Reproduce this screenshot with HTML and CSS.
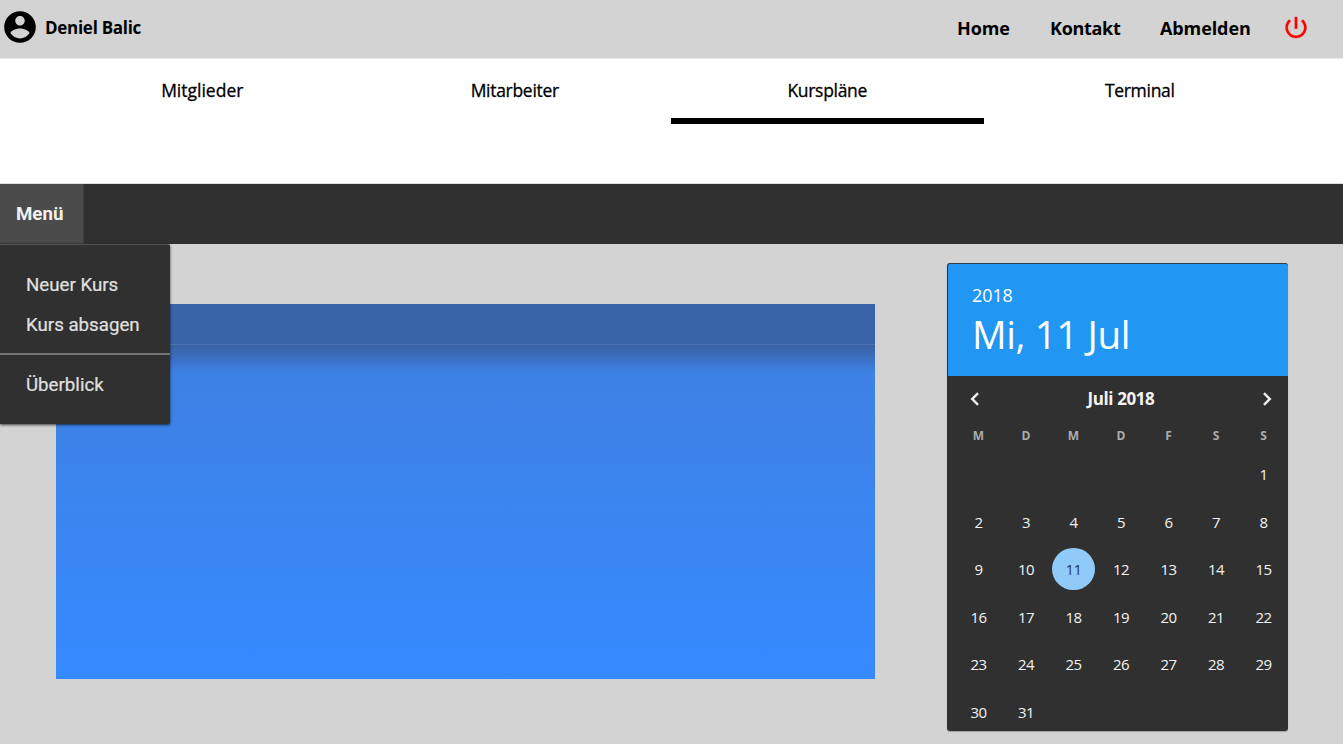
FILE: index.html
```html
<!DOCTYPE html>
<html lang="de">
<head>
<meta charset="utf-8">
<title>Kurspläne</title>
<link rel="stylesheet" href="styles.css">
</head>
<body>
<header class="topbar">
  <div class="user">
    <svg class="avatar" viewBox="0 0 24 24"><path d="M12 2C6.480 2 2 6.480 2 12s4.480 10 10 10 10-4.480 10-10S17.520 2 12 2zm0 3c1.660 0 3 1.340 3 3s-1.340 3-3 3-3-1.340-3-3 1.340-3 3-3zm0 14.200c-2.500 0-4.710-1.280-6-3.220.030-1.990 4-3.080 6-3.080 1.990 0 5.970 1.090 6 3.080-1.290 1.940-3.500 3.220-6 3.220z"/></svg>
    <span class="username">Deniel Balic</span>
  </div>
  <nav class="links">
    <a class="link link-home">Home</a>
    <a class="link link-contact">Kontakt</a>
    <a class="link link-logout">Abmelden</a>
    <svg class="power" viewBox="0 0 24 24"><path d="M13 3h-2v10h2V3zm4.830 2.170l-1.420 1.420C17.990 7.860 19 9.810 19 12c0 3.870-3.130 7-7 7s-7-3.130-7-7c0-2.190 1.010-4.140 2.580-5.420L6.170 5.170C4.230 6.820 3 9.260 3 12c0 4.970 4.030 9 9 9s9-4.030 9-9c0-2.740-1.230-5.180-3.170-6.830z"/></svg>
  </nav>
</header>
<nav class="tabs">
  <a class="tab tab-members">Mitglieder</a>
  <a class="tab">Mitarbeiter</a>
  <a class="tab tab-active">Kurspläne</a>
  <a class="tab">Terminal</a>
</nav>
<div class="menubar">
  <div class="menu-button">Menü</div>
  <div class="dropdown">
    <div class="item">Neuer Kurs</div>
    <div class="item">Kurs absagen</div>
    <div class="divider"></div>
    <div class="item">Überblick</div>
  </div>
</div>
<main class="content">
  <section class="panel"><div class="panel-head"></div><div class="panel-body"></div></section>
  <section class="picker">
    <div class="picker-head">
      <div class="year">2018</div>
      <div class="date">Mi, 11 Jul</div>
    </div>
    <div class="month-nav">
      <svg class="arrow" viewBox="0 0 24 24"><path d="M15.410 7.410L14 6l-6 6 6 6 1.410-1.410L10.830 12z"/></svg>
      <span class="month">Juli 2018</span>
      <svg class="arrow" viewBox="0 0 24 24"><path d="M10 6L8.590 7.410 13.170 12l-4.580 4.590L10 18l6-6z"/></svg>
    </div>
    <div class="weekdays"><span>M</span><span>D</span><span>M</span><span>D</span><span>F</span><span>S</span><span>S</span></div>
    <div class="days">
      <span class="day first">1</span>
      <span class="day">2</span><span class="day">3</span><span class="day">4</span><span class="day">5</span><span class="day">6</span><span class="day">7</span><span class="day">8</span>
      <span class="day">9</span><span class="day">10</span><span class="day selected"><span class="disc">11</span></span><span class="day">12</span><span class="day">13</span><span class="day">14</span><span class="day">15</span>
      <span class="day">16</span><span class="day">17</span><span class="day">18</span><span class="day">19</span><span class="day">20</span><span class="day">21</span><span class="day">22</span>
      <span class="day">23</span><span class="day">24</span><span class="day">25</span><span class="day">26</span><span class="day">27</span><span class="day">28</span><span class="day">29</span>
      <span class="day">30</span><span class="day">31</span>
    </div>
  </section>
</main>
</body>
</html>
```

FILE: styles.css
```css
* { box-sizing: border-box; }
body {
  margin: 0;
  height: 744px;
  overflow: hidden;
  background: #d3d3d3;
  color: #000;
  font-family: "Open Sans", "Noto Sans", sans-serif;
}
.topbar {
  height: 58px;
  display: flex;
  justify-content: space-between;
  align-items: flex-start;
  background: #d3d3d3;
}
.user { display: flex; align-items: center; height: 54px; padding-left: 1px; }
.avatar { width: 38px; height: 38px; }
.username { margin-left: 6px; font-size: 17px; font-weight: 700; letter-spacing: -0.28px; white-space: nowrap; }
.links { display: flex; align-items: center; height: 54px; padding-right: 33px; }
.link { padding-top: 1px; font-size: 18px; font-weight: 700; white-space: nowrap; }
.link-home { width: 93px; letter-spacing: -0.1px; }
.link-contact { width: 110px; letter-spacing: -0.3px; }
.link-logout { width: 122px; letter-spacing: -0.1px; }
.power { width: 28px; height: 29px; fill: #f00; stroke: #f00; stroke-width: .3; }
.tabs {
  height: 126px;
  padding: 0 47px 0 46px;
  display: grid;
  grid-template-columns: repeat(4, 312.5px);
  background: #fff;
  border-top: 1px solid #ececec;
  border-bottom: 1px solid #ddd;
}
.tab {
  height: 65px;
  padding-top: 3px;
  display: flex;
  justify-content: center;
  align-items: center;
  font-size: 17.5px;
  letter-spacing: -0.3px;
  -webkit-text-stroke: .3px #000;
  border-bottom: 6px solid transparent;
}
.tab-members { letter-spacing: 0; }
.tab-active { border-color: #000; }
.menubar { position: relative; height: 60px; background: #303030; }
.menu-button {
  width: 84px;
  height: 60px;
  display: flex;
  align-items: center;
  padding-left: 16px;
  background: #4b4b4b;
  border-right: 1px solid #3c3c3c;
  border-bottom: 1px solid #3c3c3c;
  color: #f0f0f0;
  font: 700 18.7px Roboto, sans-serif;
}
.dropdown {
  position: absolute;
  z-index: 2;
  left: 0;
  top: 60px;
  width: 170px;
  height: 180px;
  padding-top: 20px;
  background: #303030;
  border-top: 1px solid #555;
  border-radius: 0 2px 2px 0;
  box-shadow: 0 1px 3px rgba(0, 0, 0, .7);
  color: #e0e0e0;
  font: 400 18.7px Roboto, sans-serif;
}
.item { height: 40px; display: flex; align-items: center; padding-left: 26px; -webkit-text-stroke: .2px #e0e0e0; }
.divider { height: 2px; margin: 8px 0 10px; background: #757575; }
.content { display: flex; justify-content: space-between; align-items: flex-start; padding: 19px 55px 0 56px; }
.panel { width: 819px; height: 375px; margin-top: 41px; display: flex; flex-direction: column; }
.panel-head { height: 41px; background: #3964a8; border-bottom: 1px solid #4b74b3; }
.panel-body {
  flex: 1;
  background: linear-gradient(#3962a1 0, #3c70c4 14px, #3d81e4 27px, #3d82e6 60px, #358aff 100%);
}
.picker {
  width: 341px;
  height: 468px;
  background: #303030;
  border-radius: 3px;
  border-top: 1px solid #303b45;
  box-shadow: 0 1px 1px rgba(0, 0, 0, .25);
  color: #f3f3f3;
}
.picker-head {
  height: 112px;
  margin-left: 1px;
  padding: 19px 0 0 24px;
  background: #2196f3;
  border-radius: 2px 2px 0 0;
  color: #fff;
}
.year { height: 24px; line-height: 24px; font-size: 18px; letter-spacing: -.1px; }
.date { height: 54px; line-height: 54px; font-size: 38.5px; letter-spacing: -.4px; white-space: nowrap; }
.month-nav { height: 46px; display: flex; justify-content: space-between; align-items: center; padding: 0 8px 1px 15px; }
.arrow { width: 26px; height: 28px; fill: #f3f3f3; stroke: #f3f3f3; stroke-width: .3; }
.month { font-size: 17px; font-weight: 700; letter-spacing: -.4px; }
.weekdays, .days { display: grid; grid-template-columns: repeat(7, 47.5px); padding-left: 7.75px; text-align: center; }
.weekdays { height: 29px; line-height: 27px; color: #acacac; font-size: 12px; font-weight: 700; }
.day { height: 47.5px; padding-bottom: 1.5px; display: flex; justify-content: center; align-items: center; font-size: 15px; letter-spacing: -.5px; }
.first { grid-column: 7; }
.disc {
  width: 42.6px;
  height: 42.6px;
  display: flex;
  justify-content: center;
  align-items: center;
  border-radius: 50%;
  background: #90caf9;
  color: #303c47;
}
```
